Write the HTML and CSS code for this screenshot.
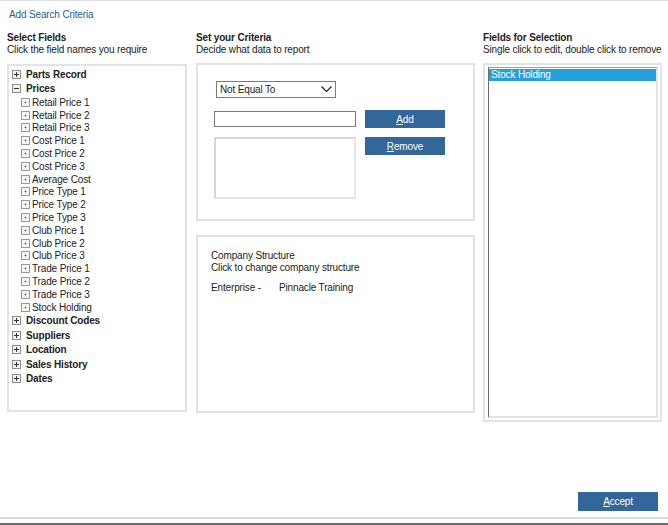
FILE: index.html
```html
<!DOCTYPE html>
<html lang="en">

<head>
    <meta charset="UTF-8">
    <title>Add Search Criteria</title>
    <link rel="stylesheet" href="styles.css">
</head>

<body>
    <div class="page">
        <div class="title">Add Search Criteria</div>

        <div class="columns">
            <!-- left: field tree -->
            <section class="col col-fields">
                <div class="heading">
                    <strong>Select Fields</strong>
                    <span>Click the field names you require</span>
                </div>
                <div class="panel tree">
                    <div class="node">
                        <svg class="toggle" width="9" height="9" viewBox="0 0 9 9"><rect x="0.5" y="0.5" width="8" height="8" fill="#f2f2f2" stroke="#8f8f8f"/><path d="M2 4.5h5M4.5 2v5" stroke="#333"/></svg>
                        Parts Record
                    </div>
                    <div class="node">
                        <svg class="toggle" width="9" height="9" viewBox="0 0 9 9"><rect x="0.5" y="0.5" width="8" height="8" fill="#f2f2f2" stroke="#8f8f8f"/><path d="M2 4.5h5" stroke="#333"/></svg>
                        Prices
                    </div>
                    <ul class="leaves">
                        <li>Retail Price 1</li>
                        <li>Retail Price 2</li>
                        <li>Retail Price 3</li>
                        <li>Cost Price 1</li>
                        <li>Cost Price 2</li>
                        <li>Cost Price 3</li>
                        <li>Average Cost</li>
                        <li>Price Type 1</li>
                        <li>Price Type 2</li>
                        <li>Price Type 3</li>
                        <li>Club Price 1</li>
                        <li>Club Price 2</li>
                        <li>Club Price 3</li>
                        <li>Trade Price 1</li>
                        <li>Trade Price 2</li>
                        <li>Trade Price 3</li>
                        <li>Stock Holding</li>
                    </ul>
                    <div class="node">
                        <svg class="toggle" width="9" height="9" viewBox="0 0 9 9"><rect x="0.5" y="0.5" width="8" height="8" fill="#f2f2f2" stroke="#8f8f8f"/><path d="M2 4.5h5M4.5 2v5" stroke="#333"/></svg>
                        Discount Codes
                    </div>
                    <div class="node">
                        <svg class="toggle" width="9" height="9" viewBox="0 0 9 9"><rect x="0.5" y="0.5" width="8" height="8" fill="#f2f2f2" stroke="#8f8f8f"/><path d="M2 4.5h5M4.5 2v5" stroke="#333"/></svg>
                        Suppliers
                    </div>
                    <div class="node">
                        <svg class="toggle" width="9" height="9" viewBox="0 0 9 9"><rect x="0.5" y="0.5" width="8" height="8" fill="#f2f2f2" stroke="#8f8f8f"/><path d="M2 4.5h5M4.5 2v5" stroke="#333"/></svg>
                        Location
                    </div>
                    <div class="node">
                        <svg class="toggle" width="9" height="9" viewBox="0 0 9 9"><rect x="0.5" y="0.5" width="8" height="8" fill="#f2f2f2" stroke="#8f8f8f"/><path d="M2 4.5h5M4.5 2v5" stroke="#333"/></svg>
                        Sales History
                    </div>
                    <div class="node">
                        <svg class="toggle" width="9" height="9" viewBox="0 0 9 9"><rect x="0.5" y="0.5" width="8" height="8" fill="#f2f2f2" stroke="#8f8f8f"/><path d="M2 4.5h5M4.5 2v5" stroke="#333"/></svg>
                        Dates
                    </div>
                </div>
            </section>

            <!-- middle: criteria + company structure -->
            <section class="col col-criteria">
                <div class="heading">
                    <strong>Set your Criteria</strong>
                    <span>Decide what data to report</span>
                </div>
                <div class="panel criteria">
                    <div class="select">
                        <span>Not Equal To</span>
                        <svg width="11" height="7" viewBox="0 0 11 7"><path d="M0.5 0.5l5 5 5-5" fill="none" stroke="#222" stroke-width="1.2"/></svg>
                    </div>
                    <div class="criteria-row">
                        <div class="criteria-inputs">
                            <div class="textbox"></div>
                            <div class="listbox"></div>
                        </div>
                        <div class="criteria-buttons">
                            <button class="btn"><u>A</u>dd</button>
                            <button class="btn"><u>R</u>emove</button>
                        </div>
                    </div>
                </div>
                <div class="panel company">
                    <p>Company Structure</p>
                    <p>Click to change company structure</p>
                    <p class="enterprise"><span>Enterprise -</span><span>Pinnacle Training</span></p>
                </div>
            </section>

            <!-- right: chosen fields -->
            <section class="col col-selection">
                <div class="heading">
                    <strong>Fields for Selection</strong>
                    <span>Single click to edit, double click to remove</span>
                </div>
                <div class="panel selection">
                    <ul class="selection-list">
                        <li class="selected">Stock Holding</li>
                    </ul>
                </div>
            </section>
        </div>

        <div class="footer">
            <div class="footer-actions">
                <button class="btn"><u>A</u>ccept</button>
            </div>
            <div class="statusbar"></div>
        </div>
    </div>
</body>

</html>
```

FILE: styles.css
```css
* {
    box-sizing: border-box;
}

body {
    margin: 0;
    font-family: "Liberation Sans", Arial, sans-serif;
    font-size: 10px;
    letter-spacing: -0.15px;
    color: #222;
    background: #fff;
}

.page {
    height: 525px;
    display: flex;
    flex-direction: column;
    border-top: 1px solid #e1e1e1;
}

.title {
    padding: 8px 0 0 9px;
    line-height: 12px;
    color: #2b5d8f;
}

.columns {
    display: flex;
    padding: 10px 0 0 7px;
}

.col {
    display: flex;
    flex-direction: column;
}

.col-fields {
    width: 180px;
    margin-right: 9px;
}

.col-criteria {
    width: 279px;
    margin-right: 8px;
}

.col-selection {
    width: 179px;
}

.heading {
    display: flex;
    flex-direction: column;
    line-height: 12px;
    padding-top: 1px;
    margin-bottom: 7px;
    white-space: nowrap;

    strong {
        font-weight: bold;
    }
}

.panel {
    border: 2px solid #dfe3eb;
    background: #fff;
}

/* tree */
.tree {
    height: 348px;
    margin-top: 1px;
    padding: 1px 0 0 3px;
}

.node {
    display: flex;
    align-items: center;
    gap: 5px;
    height: 14.5px;
    font-weight: bold;
}

.leaves {
    list-style: none;
    margin: 0;
    padding: 0 0 0 9px;

    li {
        display: flex;
        align-items: center;
        height: 12.8px;
        gap: 2px;

        &::before {
            content: "";
            width: 7px;
            height: 7px;
            border: 1px solid #9a9a9a;
            background: radial-gradient(circle, #555 0 0.8px, #f4f4f4 1.1px);
        }
    }
}

/* criteria */
.criteria {
    height: 158px;
    padding: 16px 0 0 16px;
}

.select {
    width: 120px;
    height: 17px;
    margin-left: 2px;
    border: 1px solid #7a7a7a;
    display: flex;
    align-items: center;
    justify-content: space-between;
    padding: 0 3px 0 3px;
}

.criteria-row {
    display: flex;
    gap: 9px;
    margin-top: 12px;
}

.criteria-inputs {
    display: flex;
    flex-direction: column;
    gap: 10px;
    padding-top: 1px;
}

.textbox {
    width: 142px;
    height: 16px;
    border: 1px solid #7a7a7a;
}

.listbox {
    width: 142px;
    height: 62px;
    border: 2px solid #e6e6e6;
    border-top-color: #d6d6d6;
    border-left-color: #d6d6d6;
}

.criteria-buttons {
    display: flex;
    flex-direction: column;
    gap: 9px;
}

.btn {
    width: 80px;
    height: 18px;
    border: 0;
    padding: 0;
    background: #336699;
    color: #fff;
    font: inherit;
    letter-spacing: inherit;
    cursor: pointer;
}

.company {
    height: 178px;
    margin-top: 14px;
    padding: 13px 0 0 13px;

    p {
        margin: 0;
        line-height: 12px;
    }

    .enterprise {
        margin-top: 8px;
        display: flex;

        span:first-child {
            width: 68px;
        }
    }
}

/* selection */
.selection {
    height: 359px;
    padding: 2px 2px 2px 3px;
}

.selection-list {
    list-style: none;
    margin: 0;
    padding: 1px 0 0 0;
    height: 100%;
    border-top: 1px solid #a0a0a0;
    border-left: 1px solid #6a6a6a;
    border-right: 2px solid #e3e3e3;
    border-bottom: 2px solid #e3e3e3;

    .selected {
        background: #26a0da;
        color: #fff;
        height: 12px;
        line-height: 12px;
        padding-left: 2px;
    }
}

/* footer */
.footer {
    margin-top: auto;
}

.footer-actions {
    display: flex;
    justify-content: flex-end;
    padding-right: 10px;
    margin-bottom: 6px;

    .btn {
        height: 19px;
    }
}

.statusbar {
    height: 8px;
    border-top: 2px solid #dadada;
    border-bottom: 2px solid #6e6e6e;
}
```
